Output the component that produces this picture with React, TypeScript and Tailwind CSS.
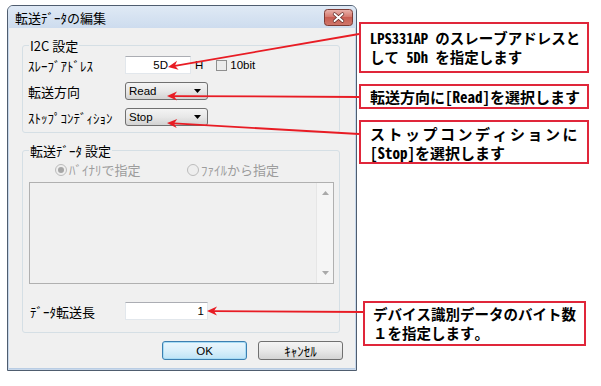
import React from "react";

function Arrow({ x1, y1, x2, y2 }: { x1: number; y1: number; x2: number; y2: number }) {
  const dx = x2 - x1;
  const dy = y2 - y1;
  const len = Math.hypot(dx, dy);
  const ux = dx / len;
  const uy = dy / len;
  const nx = -uy;
  const ny = ux;
  const L = 10;
  const W = 4.5;
  const bx = x2 - ux * L;
  const by = y2 - uy * L;
  const mx = x2 - ux * L * 0.7;
  const my = y2 - uy * L * 0.7;
  const pts = `${x2},${y2} ${bx + nx * W},${by + ny * W} ${mx},${my} ${bx - nx * W},${by - ny * W}`;
  return (
    <g>
      <line x1={x1} y1={y1} x2={mx} y2={my} stroke="#e81c24" strokeWidth={1.8} />
      <polygon points={pts} fill="#e81c24" />
    </g>
  );
}

function CloseButton() {
  return (
    <svg width="29" height="17" viewBox="0 0 29 17">
      <defs>
        <linearGradient id="cbg" x1="0" y1="0" x2="0" y2="1">
          <stop offset="0" stopColor="#eab5ae" />
          <stop offset="0.45" stopColor="#d67b71" />
          <stop offset="0.5" stopColor="#c85d52" />
          <stop offset="1" stopColor="#d0786c" />
        </linearGradient>
      </defs>
      <rect x="0.5" y="0.5" width="28" height="16" rx="3" fill="url(#cbg)" stroke="#7d3b35" />
      <path d="M10.5 5 L18.5 12 M18.5 5 L10.5 12" stroke="#5a2622" strokeWidth="3.4" strokeLinecap="round" />
      <path d="M10.5 5 L18.5 12 M18.5 5 L10.5 12" stroke="#ffffff" strokeWidth="2" strokeLinecap="round" />
    </svg>
  );
}

const jp = "font-['Noto_Sans_CJK_JP',sans-serif]";
const lat = "font-['Liberation_Sans','Noto_Sans_CJK_JP',sans-serif]";

function Select({ value }: { value: string }) {
  return (
    <div className="flex h-[18px] w-[83px] items-center justify-between rounded-[3px] border border-[#707070] bg-[#e4e4e4] bg-linear-to-b from-[#f4f4f4] via-[#e8e8e8] to-[#d2d2d2] pl-[3px] pr-[6px]">
      <span className={`${lat} text-[11.5px] leading-[14px] text-black`}>{value}</span>
      <svg width="7" height="4" viewBox="0 0 7 4">
        <polygon points="0,0 7,0 3.5,4" fill="#000" />
      </svg>
    </div>
  );
}

function Radio({ checked, label }: { checked: boolean; label: string }) {
  return (
    <div className="flex items-center gap-[2px]">
      <div className="flex h-[12px] w-[12px] items-center justify-center rounded-full border border-[#bcbcbc] bg-[#eeeeee]">
        {checked && <div className="h-[6px] w-[6px] rounded-full bg-[#a6a6a6]" />}
      </div>
      <span className={`${jp} text-[13px] leading-[14px] text-[#9d9d9d]`}>{label}</span>
    </div>
  );
}

const calloutFont =
  "font-['Noto_Sans_Mono_CJK_JP','Noto_Sans_CJK_JP',monospace] font-bold leading-[19px] text-black whitespace-nowrap";

export default function App() {
  return (
    <div className="relative h-[386px] w-[601px] overflow-hidden bg-white">
      {/* dialog */}
      <div className="pl-[7px] pt-[5px]">
        <div className="flex h-[366px] w-[350px] flex-col rounded-t-[6px] border border-[#4f5d6f] bg-[#c8d8eb]">
          {/* title bar */}
          <div className="flex h-[22px] items-center justify-between rounded-t-[5px] bg-linear-to-b from-[#dfe9f5] to-[#cddcee] pl-[7px] pr-[3px]">
            <span className={`${jp} text-[13px] leading-[15px] text-black`}>転送ﾃﾞｰﾀの編集</span>
            <CloseButton />
          </div>
          {/* client */}
          <div className="mx-[1px] mb-[1px] flex flex-1 flex-col border-b border-[#b9cde4] bg-[#f0f0f0]">
            {/* group 1 */}
            <fieldset className="ml-[13px] mt-[10px] w-[318px] rounded-[3px] border border-[#d5dfe5] pb-[6px] pl-[5px] pt-[3px]">
              <legend className={`${jp} ml-[1px] px-[1px] text-[13px] leading-[15px] text-black`}>I2C 設定</legend>
              <div className="flex flex-col gap-[8px]">
                <div className="flex h-[18px] items-center">
                  <span className={`${jp} w-[97px] text-[13px] leading-[15px] text-black`}>ｽﾚｰﾌﾞｱﾄﾞﾚｽ</span>
                  <div className="flex h-[18px] w-[66px] items-center justify-end border border-[#e2e7ec] border-t-[#abadb3] bg-white pr-[22px]">
                    <span className={`${lat} text-[11.5px] leading-[14px] text-black`}>5D</span>
                  </div>
                  <span className={`${lat} ml-[4px] text-[11.5px] leading-[14px] text-black`}>H</span>
                  <div className="ml-[13px] h-[11px] w-[11px] border border-[#8f8f8f] bg-[#ececec]" />
                  <span className={`${lat} ml-[3px] text-[11.5px] leading-[14px] text-black`}>10bit</span>
                </div>
                <div className="flex h-[18px] items-center">
                  <span className={`${jp} w-[97px] text-[13px] leading-[15px] text-black`}>転送方向</span>
                  <Select value="Read" />
                </div>
                <div className="flex h-[18px] items-center">
                  <span className={`${jp} w-[97px] text-[13px] leading-[15px] text-black`}>ｽﾄｯﾌﾟｺﾝﾃﾞｨｼｮﾝ</span>
                  <Select value="Stop" />
                </div>
              </div>
            </fieldset>
            {/* group 2 */}
            <fieldset className="ml-[13px] mt-[10px] w-[318px] rounded-[3px] border border-[#d5dfe5] pb-[12px] pl-[5px] pt-[5px]">
              <legend className={`${jp} ml-[1px] px-[1px] text-[13px] leading-[15px] text-black`}>転送ﾃﾞｰﾀ 設定</legend>
              <div className="flex h-[14px] items-center pl-[27px]">
                <div className="w-[132px]">
                  <Radio checked label="ﾊﾞｲﾅﾘで指定" />
                </div>
                <Radio checked={false} label="ﾌｧｲﾙから指定" />
              </div>
              <div className="ml-[1px] mt-[5px] flex h-[102px] w-[305px] justify-end border border-[#b0b0b0] bg-[#f0f0f0]">
                <div className="flex w-[17px] flex-col items-center justify-between border-l border-[#e6e6e6] bg-[#f5f5f5] py-[8px]">
                  <svg width="7" height="4" viewBox="0 0 7 4">
                    <polygon points="0,4 7,4 3.5,0" fill="#a9a9a9" />
                  </svg>
                  <svg width="7" height="4" viewBox="0 0 7 4">
                    <polygon points="0,0 7,0 3.5,4" fill="#a9a9a9" />
                  </svg>
                </div>
              </div>
              <div className="mt-[18px] flex h-[18px] items-center">
                <span className={`${jp} ml-[2px] w-[95px] text-[13px] leading-[15px] text-black`}>ﾃﾞｰﾀ転送長</span>
                <div className="flex h-[18px] w-[83px] items-center justify-end border border-[#e2e7ec] border-t-[#abadb3] bg-white pr-[3px]">
                  <span className={`${lat} text-[11.5px] leading-[14px] text-black`}>1</span>
                </div>
              </div>
            </fieldset>
            {/* buttons */}
            <div className="mr-[12px] mt-[8px] flex justify-end gap-[11px]">
              <div className="flex h-[19px] w-[85px] items-center justify-center rounded-[3px] border border-[#3c7fb1] bg-[#d3ecfa] bg-linear-to-b from-[#eaf6fd] via-[#d9effb] to-[#bee3f6] shadow-[inset_0_0_0_1px_#a7dcf5]">
                <span className={`${lat} text-[11.5px] leading-[14px] text-black`}>OK</span>
              </div>
              <div className="flex h-[19px] w-[85px] items-center justify-center rounded-[3px] border border-[#707070] bg-[#e4e4e4] bg-linear-to-b from-[#f4f4f4] via-[#e8e8e8] to-[#d4d4d4]">
                <span className={`${jp} text-[13px] leading-[14px] text-black`}>ｷｬﾝｾﾙ</span>
              </div>
            </div>
          </div>
        </div>
      </div>

      {/* callouts */}
      <div className={`absolute left-[359px] top-[22px] h-[51px] w-[230px] border-2 border-[#e0263a] bg-white pl-[9px] pt-[4px] text-[14.5px] ${calloutFont}`}>
        <div>LPS331AP のスレーブアドレスと</div>
        <div>して 5Dh を指定します</div>
      </div>
      <div className={`absolute left-[359px] top-[84px] flex h-[25px] w-[230px] items-center border-2 border-[#e0263a] bg-white pl-[9px] text-[15px] ${calloutFont}`}>
        転送方向に[Read]を選択します
      </div>
      <div className={`absolute left-[359px] top-[120px] h-[44px] w-[230px] border-2 border-[#e0263a] bg-white pl-[9px] pt-[2px] text-[15px] ${calloutFont}`}>
        <div className="tracking-[2.5px]">ストップコンディションに</div>
        <div>[Stop]を選択します</div>
      </div>
      <div className={`absolute left-[363px] top-[301px] h-[45px] w-[223px] border-2 border-[#e0263a] bg-white pl-[8px] pt-[1px] text-[14.5px] ${calloutFont}`}>
        <div>デバイス識別データのバイト数</div>
        <div>１を指定します。</div>
      </div>

      {/* arrows */}
      <svg className="pointer-events-none absolute left-0 top-0" width="601" height="386" viewBox="0 0 601 386">
        <Arrow x1={359} y1={34} x2={168} y2={67} />
        <Arrow x1={359} y1={97} x2={167} y2={96} />
        <Arrow x1={359} y1={134} x2={167} y2={123} />
        <Arrow x1={363} y1={312} x2={207} y2={311} />
      </svg>
    </div>
  );
}
